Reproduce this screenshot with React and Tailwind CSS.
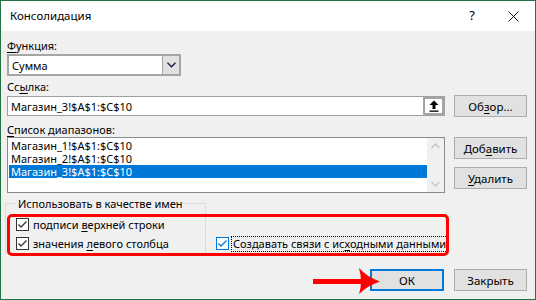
const font = { fontFamily: '"Noto Sans", "Open Sans", sans-serif' };

function Check({ focused }) {
  const c = focused ? '#0078d7' : '#333333';
  return (
    <span
      className={`flex h-[13px] w-[13px] shrink-0 items-center justify-center border bg-white ${focused ? 'border-[#0078d7]' : 'border-[#333333]'}`}
    >
      <svg width="11" height="11" viewBox="0 0 11 11" aria-hidden="true">
        <polyline points="1.5,5.5 4,8 9.5,2.5" fill="none" stroke={c} strokeWidth="1.3" />
      </svg>
    </span>
  );
}

function Btn({ children, primary, className = '' }) {
  return (
    <div
      className={`flex h-[22px] items-center justify-center bg-[#e1e1e1] text-[11.5px] text-black ${primary ? 'border-2 border-[#0078d7]' : 'border border-[#adadad]'} ${className}`}
    >
      {children}
    </div>
  );
}

const ranges = ['Магазин_1!$A$1:$C$10', 'Магазин_2!$A$1:$C$10', 'Магазин_3!$A$1:$C$10'];

export default function App() {
  return (
    <div
      className="relative flex h-[300px] w-[536px] flex-col overflow-hidden border border-[#217346] bg-[#f0f0f0] text-black"
      style={font}
    >
      <div className="flex h-[30px] shrink-0 items-center bg-white pl-[9px] pr-[16px]">
        <span className="text-[11.5px]">Консолидация</span>
        <span className="ml-auto mr-[33px] text-[13px]">?</span>
        <svg width="11" height="11" viewBox="0 0 11 11" aria-hidden="true">
          <path d="M0.5 0.5 L10.5 10.5 M10.5 0.5 L0.5 10.5" stroke="#111" strokeWidth="1" />
        </svg>
      </div>

      <div className="flex flex-col pl-[6px] pr-[8px] text-[11px] leading-[15px]">
        <div className="mt-[7px] h-[15px]">
          <span className="underline underline-offset-2">Ф</span>ункция:
        </div>
        <div className="mt-[1px] flex h-[22px] w-[174px] border-2 border-[#a5a5a5] bg-white">
          <div className="flex flex-1 items-center pl-[3px]">Сумма</div>
          <div className="flex w-[17px] items-center justify-center border-l border-[#a5a5a5] bg-[#e1e1e1]">
            <svg width="9" height="6" viewBox="0 0 9 6" aria-hidden="true">
              <polyline points="0.5,0.8 4.5,4.8 8.5,0.8" fill="none" stroke="#1a1a40" strokeWidth="1.3" />
            </svg>
          </div>
        </div>

        <div className="mt-[3px] h-[15px]">
          Сс<span className="underline underline-offset-2">ы</span>лка:
        </div>
        <div className="mt-[1px] flex gap-[9px]">
          <div className="mt-[1px] flex h-[20px] w-[438px] border border-[#a0a0a0] bg-white">
            <div className="flex flex-1 items-center pl-[3px]">Магазин_3!$A$1:$C$10</div>
            <div className="flex w-[21px] items-center justify-center border-2 border-[#a5a5a5] bg-white">
              <svg width="10" height="12" viewBox="0 0 10 12" aria-hidden="true">
                <path d="M5 0.5 L9.5 5 L6.5 5 L6.5 9 L3.5 9 L3.5 5 L0.5 5 Z" fill="#000" />
                <rect x="0.5" y="10.5" width="9" height="1.3" fill="#000" />
              </svg>
            </div>
          </div>
          <Btn className="w-[73px]">
            <span>
              Об<span className="underline underline-offset-2">з</span>ор...
            </span>
          </Btn>
        </div>

        <div className="mt-[5px] h-[15px]">
          <span className="underline underline-offset-2">С</span>писок диапазонов:
        </div>
        <div className="flex gap-[9px]">
          <div className="flex h-[56px] w-[438px] border border-[#8a8a8a] bg-white">
            <div className="flex flex-1 flex-col pl-[1px] pt-[1px]">
              {ranges.map((r, i) => (
                <div
                  key={r}
                  className={`flex h-[13px] items-center overflow-hidden pl-[2px] leading-[13px] ${i === 2 ? 'bg-[#0078d7] text-white' : ''}`}
                >
                  {r}
                </div>
              ))}
            </div>
            <div className="flex w-[17px] flex-col items-center justify-between bg-[#f0f0f0] py-[5px]">
              <svg width="9" height="6" viewBox="0 0 9 6" aria-hidden="true">
                <polyline points="0.5,5 4.5,1 8.5,5" fill="none" stroke="#c4c4c4" strokeWidth="1.3" />
              </svg>
              <svg width="9" height="6" viewBox="0 0 9 6" aria-hidden="true">
                <polyline points="0.5,1 4.5,5 8.5,1" fill="none" stroke="#c4c4c4" strokeWidth="1.3" />
              </svg>
            </div>
          </div>
          <div className="flex w-[73px] flex-col gap-[8px]">
            <Btn>
              <span>
                Доб<span className="underline underline-offset-2">а</span>вить
              </span>
            </Btn>
            <Btn>
              <span>
                <span className="underline underline-offset-2">У</span>далить
              </span>
            </Btn>
          </div>
        </div>

        <div className="mt-[3px] flex items-end">
          <fieldset className="-ml-[2px] w-[201px] border border-[#dcdcdc] pb-0 pl-[10px] pt-[4px]">
            <legend className="ml-[1px] h-[15px] px-[1px]">Использовать в качестве имен</legend>
            <div className="flex h-[19px] items-center gap-[4px]">
              <Check />
              <span>
                подписи <span className="underline underline-offset-2">в</span>ерхней строки
              </span>
            </div>
            <div className="flex h-[19px] items-center gap-[4px]">
              <Check />
              <span>
                значения <span className="underline underline-offset-2">л</span>евого столбца
              </span>
            </div>
          </fieldset>
          <div className="mb-[1px] ml-[10px] flex h-[19px] items-center gap-[2px]">
            <Check focused />
            <span className="border border-dotted border-black px-[1px] leading-[14px]">
              Создавать связи с ис<span className="underline underline-offset-2">х</span>одными данными
            </span>
          </div>
        </div>

        <div className="mt-[15px] flex justify-end gap-[10px]">
          <Btn primary className="w-[74px]">ОК</Btn>
          <Btn className="w-[73px]">Закрыть</Btn>
        </div>
      </div>

      <div className="pointer-events-none absolute left-[6px] top-[213px] h-[42px] w-[442px] rounded-[5px] border-[3px] border-[#ff0000]" />
      <svg
        className="pointer-events-none absolute left-[310px] top-[266px]"
        width="72"
        height="28"
        viewBox="0 0 72 28"
        aria-hidden="true"
      >
        <rect x="2" y="12" width="52" height="5" fill="#ff0000" />
        <path d="M48 1 Q56 10 69 14.5 Q56 19 48 27 Q52 15 48 1 Z" fill="#ff0000" />
      </svg>
    </div>
  );
}
